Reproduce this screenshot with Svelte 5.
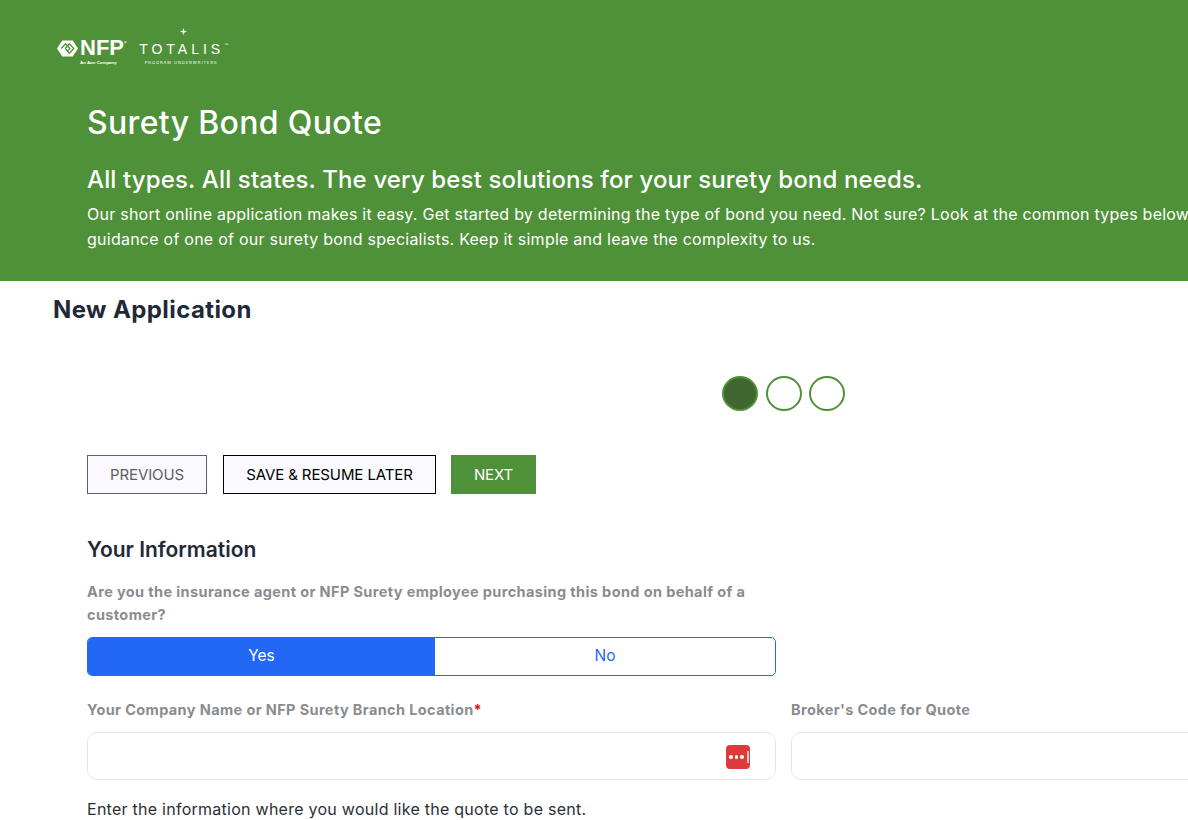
<script>
  const steps = [true, false, false];
</script>

<div class="page">
  <header class="hero">
    <div class="logo">
      <div class="nfp">
        <div class="nfp-row">
          <svg class="hex" viewBox="0 0 22 17" aria-hidden="true">
            <path d="M5.5 0H16.5L22 8.5L16.5 17H5.5L0 8.5Z" fill="#fff"/>
            <path d="M4.5 8.5L9 3.5L13.5 8.5L10.5 12M8.5 8.5L13 3.5L17.5 8.5L13 13.5L8.5 8.5" stroke="#4f9139" stroke-width="1.3" fill="none"/>
          </svg>
          <span class="nfp-word">NFP</span><span class="reg">®</span>
        </div>
        <span class="aon">An Aon Company</span>
      </div>
      <div class="totalis">
        <svg class="spark" viewBox="0 0 8 8" aria-hidden="true"><path d="M4 0L5 3L8 4L5 5L4 8L3 5L0 4L3 3Z" fill="#fff"/></svg>
        <span class="tot-word">TOTALIS<sup>™</sup></span>
        <span class="tot-sub">PROGRAM UNDERWRITERS</span>
      </div>
    </div>
    <div class="hero-text">
      <h1>Surety Bond Quote</h1>
      <h2>All types. All states. The very best solutions for your surety bond needs.</h2>
      <p>Our short online application makes it easy. Get started by determining the type of bond you need. Not sure? Look at the common types below or get the guidance of one of our surety bond specialists. Keep it simple and leave the complexity to us.</p>
    </div>
  </header>

  <main>
    <h3 class="title">New Application</h3>
    <div class="steps">
      {#each steps as on}
        <span class="dot" class:on></span>
      {/each}
    </div>
    <div class="content">
      <div class="buttons">
        <button class="btn prev">PREVIOUS</button>
        <button class="btn save">SAVE &amp; RESUME LATER</button>
        <button class="btn next">NEXT</button>
      </div>
      <h4>Your Information</h4>
      <div class="col-left">
        <div class="label q">Are you the insurance agent or NFP Surety employee purchasing this bond on behalf of a customer?</div>
        <div class="toggle">
          <span class="opt yes">Yes</span>
          <span class="opt no">No</span>
        </div>
      </div>
      <div class="fields">
        <div class="field left">
          <div class="label">Your Company Name or NFP Surety Branch Location<span class="req">*</span></div>
          <div class="input">
            <span class="pw">
              <i></i><i></i><i></i><b></b>
            </span>
          </div>
        </div>
        <div class="field right">
          <div class="label">Broker's Code for Quote</div>
          <div class="input"></div>
        </div>
      </div>
      <div class="note">Enter the information where you would like the quote to be sent.</div>
    </div>
  </main>
</div>

<style>
  :global(body) {
    margin: 0;
    background: #fff;
    overflow: hidden;
  }
  .page {
    width: 1188px;
    height: 820px;
    overflow: hidden;
    font-family: Inter, "Open Sans", sans-serif;
    color: #1f2937;
  }
  .hero {
    height: 281px;
    box-sizing: border-box;
    background: #4f9139;
    color: #fff;
    padding-top: 28px;
  }
  .logo {
    display: flex;
    align-items: flex-start;
    gap: 13px;
    margin-left: 57px;
    height: 52px;
  }
  .nfp {
    padding-top: 11px;
    display: flex;
    flex-direction: column;
    align-items: flex-start;
  }
  .nfp-row {
    display: flex;
    align-items: center;
    height: 18px;
  }
  .hex { width: 21px; height: 17px; margin-right: 2px; }
  .nfp-word {
    font-family: "Liberation Sans", sans-serif;
    font-weight: 700;
    font-size: 22px;
    line-height: 18px;
  }
  .reg { font-size: 4px; align-self: flex-start; margin-top: 1px; }
  .aon {
    font-family: "Liberation Sans", sans-serif;
    font-weight: 700;
    font-size: 4.4px;
    line-height: 7px;
    margin-top: 2px;
    margin-left: 23px;
    white-space: nowrap;
  }
  .totalis {
    display: flex;
    flex-direction: column;
    align-items: center;
    position: relative;
    width: 88px;
    padding-top: 11px;
  }
  .spark { position: absolute; top: 0; left: 40px; width: 7px; height: 7px; }
  .tot-word {
    font-family: "Liberation Sans", sans-serif;
    font-size: 14px;
    line-height: 20px;
    letter-spacing: 4px;
    white-space: nowrap;
  }
  .tot-word sup { font-size: 4px; letter-spacing: 0; vertical-align: 8px; line-height: 0; }
  .tot-sub {
    font-size: 4px;
    line-height: 6px;
    margin: 1px 5px 0 0;
    letter-spacing: 1px;
    white-space: nowrap;
  }
  .hero-text {
    margin-left: 87px;
    width: 1200px;
  }
  h1 {
    margin: 0;
    padding-top: 20px;
    font-size: 32px;
    line-height: 46px;
    font-weight: 500;
    letter-spacing: 0.33px;
  }
  h2 {
    margin: 16px 0 0;
    font-size: 24px;
    line-height: 36px;
    font-weight: 500;
    letter-spacing: 0.14px;
  }
  p {
    margin: 4px 0 0;
    font-size: 16px;
    line-height: 25px;
    letter-spacing: 0.245px;
  }
  .title {
    margin: 12px 0 0 53px;
    font-size: 24px;
    line-height: 34px;
    font-weight: 700;
    letter-spacing: 0.4px;
  }
  .steps {
    display: flex;
    gap: 7.5px;
    margin: 49px 0 0 722px;
  }
  .dot {
    box-sizing: border-box;
    width: 36px;
    height: 35px;
    border: 2px solid #4f9139;
    border-radius: 50%;
  }
  .dot.on { background: #3f672f; }
  .content { margin-left: 87px; }
  .buttons {
    display: flex;
    margin-top: 44px;
  }
  .btn {
    box-sizing: border-box;
    height: 39px;
    font-family: inherit;
    font-size: 15px;
    letter-spacing: -0.1px;
    padding: 0;
    border-radius: 0;
    background: #f9f9ff;
  }
  .prev { width: 120px; border: 1px solid #5f5f5f; color: #5f5f5f; }
  .save { width: 213px; margin-left: 16px; border: 1px solid #000; color: #000; }
  .next { width: 85px; margin-left: 15px; border: 0; background: #4f9139; color: #fff; }
  h4 {
    margin: 41px 0 0;
    font-size: 21px;
    line-height: 30px;
    font-weight: 600;
  }
  .col-left { width: 689px; }
  .label {
    font-size: 14.5px;
    line-height: 23px;
    font-weight: 700;
    letter-spacing: 0.38px;
    color: #8a8c90;
  }
  .q { margin-top: 15px; }
  .toggle {
    display: flex;
    height: 39px;
    margin-top: 11px;
    box-sizing: border-box;
    border: 1px solid #2368f5;
    border-radius: 5px;
    overflow: hidden;
  }
  .opt {
    display: flex;
    align-items: center;
    justify-content: center;
    font-size: 15.5px;
    padding-bottom: 2px;
  }
  .yes { width: 347px; background: #2368f5; color: #fff; }
  .no { flex: 1; color: #2368f5; }
  .fields {
    display: flex;
    gap: 15px;
    margin-top: 22px;
    width: 1200px;
  }
  .field.left { width: 689px; }
  .field.right { flex: 1; }
  .input {
    box-sizing: border-box;
    position: relative;
    height: 48px;
    margin-top: 11px;
    border: 1px solid #e6e6e6;
    border-radius: 10px;
    background: #fff;
  }
  .req { color: #e01010; }
  .pw {
    position: absolute;
    top: 12px;
    right: 25px;
    width: 24px;
    height: 24px;
    box-sizing: border-box;
    padding-left: 3px;
    border-radius: 4px;
    background: #df3a3a;
    display: flex;
    align-items: center;
    gap: 2px;
  }
  .pw i {
    width: 3.5px;
    height: 3.5px;
    border-radius: 50%;
    background: #fff;
  }
  .pw b {
    width: 2px;
    height: 12px;
    margin-left: 1px;
    background: #f3c4c4;
  }
  .note {
    margin-top: 17px;
    font-size: 16px;
    line-height: 24px;
    letter-spacing: 0.26px;
    color: #2a2f38;
  }
</style>
